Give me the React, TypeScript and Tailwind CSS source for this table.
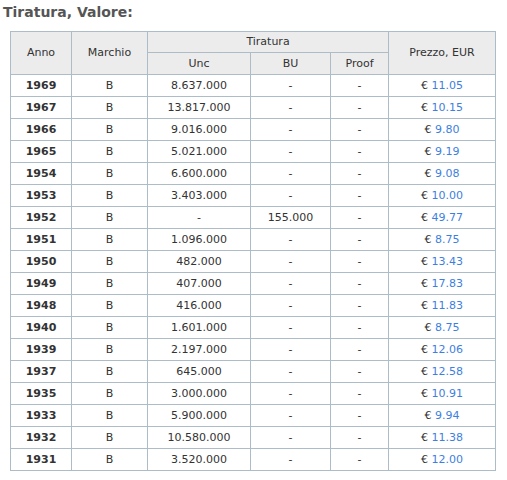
const rows: [string, string, string, string, string][] = [
  ["1969", "B", "8.637.000", "-", "11.05"],
  ["1967", "B", "13.817.000", "-", "10.15"],
  ["1966", "B", "9.016.000", "-", "9.80"],
  ["1965", "B", "5.021.000", "-", "9.19"],
  ["1954", "B", "6.600.000", "-", "9.08"],
  ["1953", "B", "3.403.000", "-", "10.00"],
  ["1952", "B", "-", "155.000", "49.77"],
  ["1951", "B", "1.096.000", "-", "8.75"],
  ["1950", "B", "482.000", "-", "13.43"],
  ["1949", "B", "407.000", "-", "17.83"],
  ["1948", "B", "416.000", "-", "11.83"],
  ["1940", "B", "1.601.000", "-", "8.75"],
  ["1939", "B", "2.197.000", "-", "12.06"],
  ["1937", "B", "645.000", "-", "12.58"],
  ["1935", "B", "3.000.000", "-", "10.91"],
  ["1933", "B", "5.900.000", "-", "9.94"],
  ["1932", "B", "10.580.000", "-", "11.38"],
  ["1931", "B", "3.520.000", "-", "12.00"],
];

const cell = "border border-[#aebcc7] text-center p-0 pt-px";

export default function App() {
  return (
    <div className="min-h-screen bg-white text-[#333] font-['DejaVu_Sans',Verdana,sans-serif] text-[11px]">
      <h2 className="pl-[3px] pt-[4px] h-[31px] text-[14px] font-bold text-[#555] leading-[17px]">
        Tiratura, Valore:
      </h2>
      <table className="ml-[10px] w-[485px] table-fixed border-collapse">
        <colgroup>
          <col className="w-[61px]" />
          <col className="w-[76px]" />
          <col className="w-[103px]" />
          <col className="w-[80px]" />
          <col className="w-[58px]" />
          <col className="w-[107px]" />
        </colgroup>
        <thead className="bg-[#ececec]">
          <tr className="h-[21px]">
            <th rowSpan={2} className={`${cell} font-normal`}>Anno</th>
            <th rowSpan={2} className={`${cell} font-normal`}>Marchio</th>
            <th colSpan={3} className={`${cell} font-normal`}>Tiratura</th>
            <th rowSpan={2} className={`${cell} font-normal`}>Prezzo, EUR</th>
          </tr>
          <tr className="h-[22px]">
            <th className={`${cell} font-normal`}>Unc</th>
            <th className={`${cell} font-normal`}>BU</th>
            <th className={`${cell} font-normal`}>Proof</th>
          </tr>
        </thead>
        <tbody>
          {rows.map(([year, mark, unc, bu, price]) => (
            <tr key={year} className="h-[22px]">
              <td className={`${cell} font-bold`}>{year}</td>
              <td className={cell}>{mark}</td>
              <td className={cell}>{unc}</td>
              <td className={cell}>{bu}</td>
              <td className={cell}>-</td>
              <td className={cell}>
                € <span className="text-[#3d7fe0]">{price}</span>
              </td>
            </tr>
          ))}
        </tbody>
      </table>
    </div>
  );
}
